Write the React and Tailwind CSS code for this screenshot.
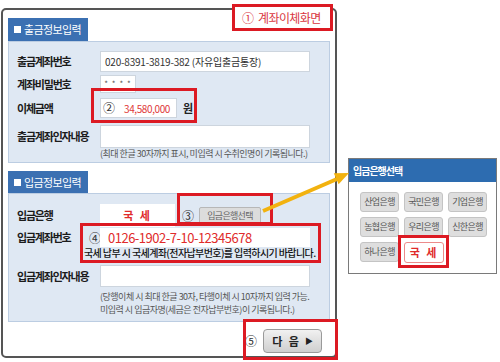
import React from 'react';

const font = "font-['Noto_Sans_CJK_KR','Noto_Sans',sans-serif]";

const Label = ({ children, className = 'w-[83px]' }) => (
  <div className={`${className} shrink-0 text-[11px] font-bold tracking-[-1.2px] text-[#1b1b1b] leading-none`}>{children}</div>
);

const Tab = ({ children, className = '' }) => (
  <div className={`w-[80px] bg-[#3b70b2] flex items-center pl-[6px] gap-[3px] text-white text-[11px] tracking-[-0.6px] ${className}`}>
    <span className="w-[7px] h-[7px] bg-white inline-block" />
    <span>{children}</span>
  </div>
);

const RedBox = ({ className }) => (
  <div className={`absolute border-[3px] border-[#dc1a23] pointer-events-none ${className}`} />
);

const BankBtn = ({ children }) => (
  <div className="w-[39px] h-[20px] rounded-[3px] bg-[#dedede] border border-[#c4c4c4] flex items-center justify-center text-[9px] tracking-[-0.6px] text-[#555]">
    {children}
  </div>
);

export default function App() {
  return (
    <div className={`relative w-[500px] h-[362px] bg-white overflow-hidden ${font}`}>
      <div className="flex items-start">
        {/* main window */}
        <div className="ml-[1px] mt-[8px] w-[336px] h-[350px] border-2 border-[#555] rounded-[5px] pl-[5px] pr-[5px] pt-[8px]">
          <Tab className="h-[23px]">출금정보입력</Tab>
          <div className="w-[322px] h-[122px] bg-[#dfe8f3] border border-[#bccde2] pl-[8px] pt-[9px]">
            <div className="flex items-center h-[21px]">
              <Label>출금계좌번호</Label>
              <div className="w-[210px] h-[21px] bg-white border border-[#cdd5de] flex items-center pl-[4px] text-[10px] text-[#333] tracking-[-0.2px]">
                020-8391-3819-382 (자유입출금통장)
              </div>
            </div>
            <div className="flex items-center h-[18px] mt-[3px]">
              <Label>계좌비밀번호</Label>
              <div className="w-[36px] h-[18px] bg-white border border-[#cdd5de] flex items-center justify-center text-[8px] text-[#555] tracking-[1px]">
                * * * *
              </div>
            </div>
            <div className="flex items-center h-[20px] mt-[5px]">
              <Label>이체금액</Label>
              <div className="w-[77px] h-[20px] bg-white border border-[#cdd5de] flex items-center pl-[2px]">
                <span className="text-[12px] text-[#333] leading-none">②</span>
                <span className="ml-[9px] text-[10px] text-[#e03a3a] tracking-[-0.4px]">34,580,000</span>
              </div>
              <span className="ml-[6px] text-[11px] font-bold text-[#222]">원</span>
            </div>
            <div className="flex items-center h-[23px] mt-[7px]">
              <Label>출금계좌인자내용</Label>
              <div className="w-[210px] h-[23px] bg-white border border-[#cdd5de]" />
            </div>
            <div className="pl-[83px] text-[9px] leading-[11px] tracking-[-0.5px] text-[#555]">
              (최대 한글 30자까지 표시, 미입력 시 수취인명이 기록됩니다.)
            </div>
          </div>

          <Tab className="h-[22px] mt-[8px]">입금정보입력</Tab>
          <div className="w-[322px] h-[129px] bg-[#dfe8f3] border border-[#bccde2] pl-[8px] pt-[10px]">
            <div className="flex items-center h-[23px]">
              <Label>입금은행</Label>
              <div className="w-[75px] h-[23px] bg-white flex items-center justify-center text-[11px] font-bold text-[#e02b2b] tracking-[2px]">
                국 세
              </div>
              <span className="ml-[7px] text-[12px] text-[#333] leading-none">③</span>
              <div className="ml-[5px] w-[62px] h-[17px] bg-[#dcdcdc] border border-[#b7b7b7] rounded-[2px] flex items-center justify-center text-[9px] tracking-[-0.7px] text-[#666]">
                입금은행선택
              </div>
            </div>
            <div className="flex items-center h-[19px] mt-[1px]">
              <Label className="w-[72px]">입금계좌번호</Label>
              <span className="w-[11px] text-[12px] text-[#333] leading-none">④</span>
              <div className="w-[210px] h-[19px] bg-white flex items-center pl-[8px] text-[13px] text-[#e02b2b] tracking-[-0.5px]">
                0126-1902-7-10-12345678
              </div>
            </div>
            <div className="ml-[67px] h-[12px] flex items-center text-[10px] leading-none font-medium tracking-[-0.6px] text-[#111] whitespace-nowrap">
              국세 납부 시 국세계좌(전자납부번호)를 입력하시기 바랍니다.
            </div>
            <div className="flex items-center h-[22px] mt-[6px]">
              <Label>입금계좌인자내용</Label>
              <div className="w-[210px] h-[22px] bg-white border border-[#cdd5de]" />
            </div>
            <div className="pl-[83px] mt-[3px] text-[9px] leading-[13px] tracking-[-0.5px] text-[#555]">
              <div>(당행이체 시 최대 한글 30자, 타행이체 시 10자까지 입력 가능.</div>
              <div>미입력 시 입금자명(세금은 전자납부번호)이 기록됩니다.)</div>
            </div>
          </div>

          <div className="flex items-center justify-end mt-[7px] pr-[8px]">
            <span className="text-[12px] text-[#333] leading-none">⑤</span>
            <div className="ml-[6px] w-[59px] h-[24px] rounded-[4px] border border-[#9a9a9a] bg-gradient-to-b from-[#f1f1f1] to-[#cfcfcf] flex items-center justify-center gap-[4px] text-[11px] font-bold text-[#222]">
              <span className="tracking-[2px]">다 음</span>
              <span className="text-[8px]">▶</span>
            </div>
          </div>
        </div>

        {/* bank select popup */}
        <div className="ml-[11px] mt-[158px] w-[149px] h-[116px] border border-[#7a7a7a] bg-white">
          <div className="h-[23px] bg-[#2d6cb0] flex items-center pl-[4px] text-white text-[10px] font-bold tracking-[-1px]">
            입금은행선택
          </div>
          <div className="pl-[11px] pt-[10px] flex flex-col gap-[5px]">
            <div className="flex gap-[5px]">
              <BankBtn>산업은행</BankBtn>
              <BankBtn>국민은행</BankBtn>
              <BankBtn>기업은행</BankBtn>
            </div>
            <div className="flex gap-[5px]">
              <BankBtn>농협은행</BankBtn>
              <BankBtn>우리은행</BankBtn>
              <BankBtn>신한은행</BankBtn>
            </div>
            <div className="flex gap-[5px]">
              <BankBtn>하나은행</BankBtn>
              <div className="w-[40px] h-[21px] rounded-[3px] bg-white border border-[#ec8b8b] flex items-center justify-center text-[11px] font-bold text-[#e02b2b] tracking-[2px]">
                국 세
              </div>
            </div>
          </div>
        </div>
      </div>

      {/* annotations */}
      <div className="absolute left-[232px] top-[4px] w-[101px] h-[27px] bg-white border-[3px] border-[#dc1a23] flex items-center pl-[7px] text-[#d9363e]">
        <span className="text-[12px] leading-none">①</span>
        <span className="ml-[4px] text-[12px] tracking-[-0.6px]">계좌이체화면</span>
      </div>
      <RedBox className="left-[91px] top-[88px] w-[106px] h-[35px]" />
      <RedBox className="left-[177px] top-[193px] w-[96px] h-[32px]" />
      <RedBox className="left-[80px] top-[223px] w-[241px] h-[40px]" />
      <RedBox className="left-[243px] top-[319px] w-[95px] h-[41px]" />
      <RedBox className="left-[398px] top-[235px] w-[51px] h-[33px]" />

      <svg className="absolute left-0 top-0 pointer-events-none" width="500" height="362">
        <line x1="263" y1="211" x2="337" y2="179" stroke="#f2b20f" strokeWidth="4" />
        <polygon points="349,173 333.8,173.2 338.6,184.2" fill="#f2b20f" />
      </svg>
    </div>
  );
}
